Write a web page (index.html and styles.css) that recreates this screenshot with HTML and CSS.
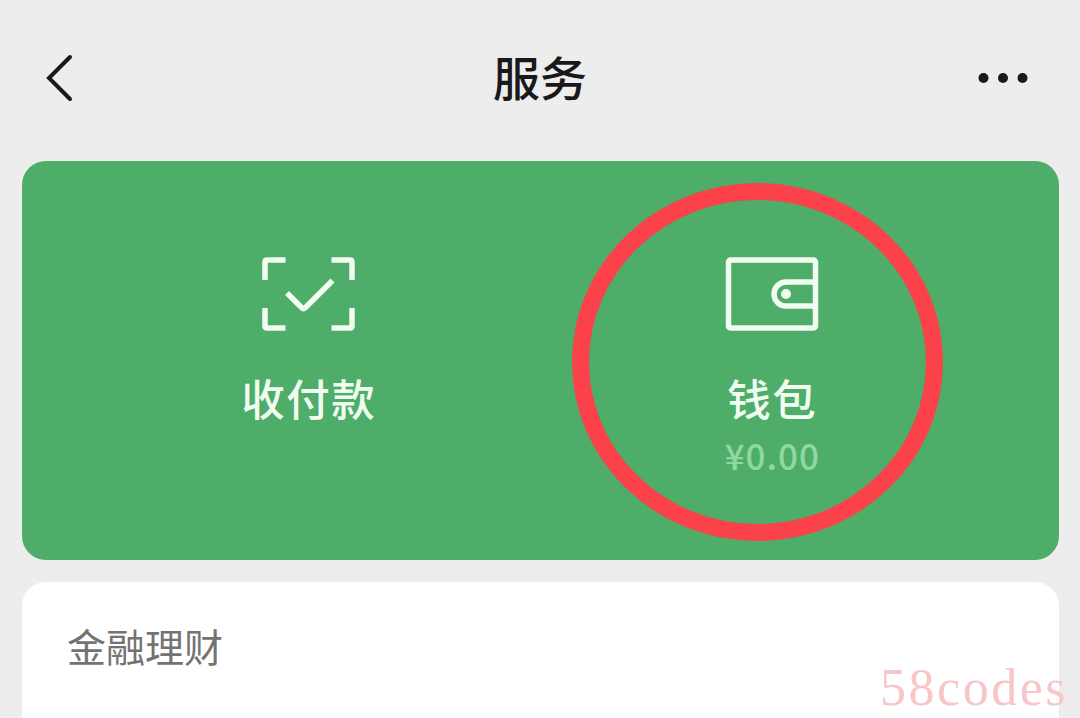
FILE: index.html
```html
<!DOCTYPE html>
<html lang="zh-CN">

<head>
    <meta charset="UTF-8">
    <meta name="viewport" content="width=device-width, initial-scale=1.0">
    <title>服务</title>
    <link rel="stylesheet" href="styles.css">
</head>

<body>
    <header class="topbar">
        <svg class="back" viewBox="0 0 30 50" fill="none">
            <path d="M25 4 L4 25 L25 46" />
        </svg>
        <h1>服务</h1>
        <svg class="more" viewBox="0 0 50 12">
            <circle cx="5.500" cy="6" r="5" />
            <circle cx="25" cy="6" r="5" />
            <circle cx="44.500" cy="6" r="5" />
        </svg>
    </header>

    <main>
        <section class="pay">
            <div class="item">
                <svg class="icon" viewBox="0 0 94 76" fill="none">
                    <path d="M3 24 V6 Q3 4 5 4 H23.500 M69.500 4 H88 Q90 4 90 6 V24 M90 52 V70 Q90 72 88 72 H69.500 M23.500 72 H5 Q3 72 3 70 V52" />
                    <path d="M25 37 L39.500 51.500 Q41.500 53.500 43.500 51.500 L70.500 24.500" />
                </svg>
                <span class="name">收付款</span>
            </div>
            <div class="item">
                <svg class="icon" viewBox="0 0 94 76" fill="none">
                    <rect x="3.500" y="4" width="87" height="68" rx="2" />
                    <path d="M90 26 H61 A12 12 0 0 0 61 50 H90" />
                    <circle class="dot" cx="61" cy="38" r="5" />
                </svg>
                <span class="name">钱包</span>
                <span class="money">¥0.00</span>
            </div>
            <div class="ring"></div>
        </section>

        <section class="finance">
            <h2>金融理财</h2>
        </section>
    </main>

    <div class="watermark">58codes</div>
</body>

</html>
```
FILE: styles.css
```css
* {
    margin: 0;
    padding: 0;
    box-sizing: border-box;
}

body {
    position: relative;
    height: 718px;
    overflow: hidden;
    background-color: #ededed;
    font-family: "Noto Sans CJK SC", sans-serif;
}

.topbar {
    height: 161px;
    padding: 0 52px 6px 45px;
    display: flex;
    align-items: center;
    justify-content: space-between;
}

.topbar h1 {
    font-size: 47px;
    font-weight: 500;
    line-height: 70px;
    color: #191919;
    margin: 0 0 4px 27px;
}

.back {
    width: 30px;
    height: 50px;
    stroke: #191919;
    stroke-width: 4;
    stroke-linecap: round;
}

.more {
    width: 50px;
    height: 12px;
    fill: #191919;
}

main {
    padding: 0 21px 0 22px;
}

.pay {
    position: relative;
    height: 399px;
    padding: 95px 55px 0;
    display: flex;
    background-color: #4dad69;
    border-radius: 24px;
}

.item {
    flex: 1;
    display: flex;
    flex-direction: column;
    align-items: center;
}

.icon {
    width: 94px;
    height: 76px;
    stroke: #f1fdf1;
    stroke-width: 5.5;
}

.icon .dot {
    fill: #f1fdf1;
    stroke: none;
}

.name {
    margin-top: 34px;
    font-size: 43.5px;
    font-weight: 500;
    line-height: 64px;
    letter-spacing: 1.5px;
    color: #f1fdf1;
}

.money {
    font-size: 35px;
    font-weight: 500;
    line-height: 44px;
    letter-spacing: 1px;
    margin-top: 3px;
    color: #8fd8a0;
}

/* marca em volta da carteira */
.ring {
    position: absolute;
    left: 550px;
    top: 22px;
    width: 371px;
    height: 358px;
    border: 17px solid #fb424b;
    border-radius: 50%;
}

.finance {
    height: 160px;
    margin-top: 22px;
    padding: 34px 45px;
    background-color: #fff;
    border-radius: 24px;
}

.finance h2 {
    font-size: 39px;
    font-weight: 400;
    line-height: 58px;
    color: #737373;
}

.watermark {
    position: absolute;
    right: 12px;
    bottom: 0;
    font-family: "Liberation Serif", serif;
    font-size: 52px;
    line-height: 60px;
    letter-spacing: 2.5px;
    color: #f9c6c8;
}
```
